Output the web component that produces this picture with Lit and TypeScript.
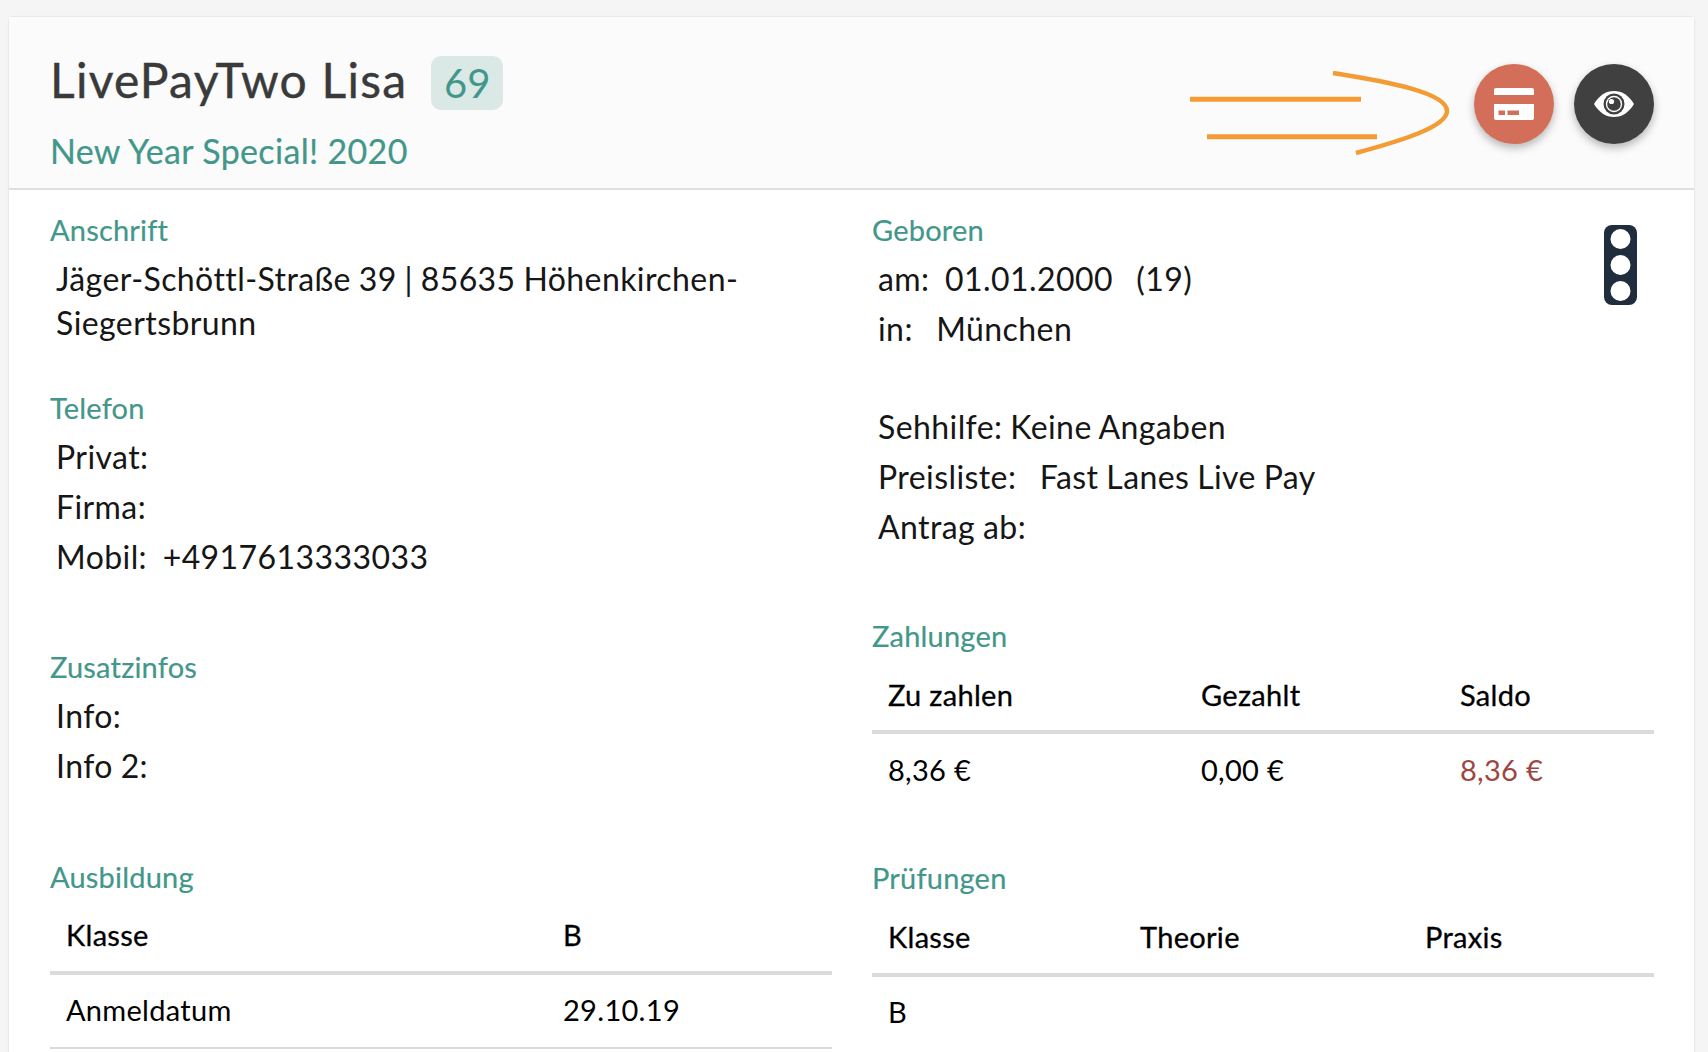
import { LitElement, html, css } from 'lit';
import { customElement } from 'lit/decorators.js';

@customElement('app-root')
export class AppRoot extends LitElement {
  static styles = css`
    :host {
      display: block;
      height: 1052px;
      overflow: hidden;
      box-sizing: border-box;
      padding: 17px 14px 0 9px;
      background: #f5f5f5;
      font-family: Lato, 'Noto Sans', sans-serif;
      font-size: 32px;
      color: #161616;
    }

    .card {
      height: 1100px;
      background: #fff;
      border-radius: 4px;
      box-shadow: 0 0 2px rgba(0, 0, 0, 0.18);
    }

    .head {
      position: relative;
      box-sizing: border-box;
      height: 173px;
      padding: 33px 40px 0 41px;
      display: flex;
      justify-content: space-between;
      background: #fbfbfb;
      border-bottom: 2px solid #dfdfdf;
    }

    .title-line {
      display: flex;
      align-items: center;
      gap: 24px;
    }

    .name {
      margin-bottom: 6px;
      font-size: 48px;
      line-height: 60px;
      letter-spacing: 1.23px;
      color: #3a3a3a;
      -webkit-text-stroke: 0.4px #3a3a3a;
    }

    .badge {
      width: 72px;
      height: 54px;
      display: flex;
      align-items: center;
      justify-content: center;
      border-radius: 10px;
      background: #dae8e6;
      color: #43978a;
      font-size: 40px;
    }

    .subtitle {
      margin-top: 13px;
      font-size: 34px;
      line-height: 44px;
      letter-spacing: 0.33px;
      color: #43978a;
      -webkit-text-stroke: 0.2px #43978a;
    }

    .actions {
      display: flex;
      gap: 20px;
      padding-top: 13.5px;
    }

    .round {
      width: 80px;
      height: 80px;
      border-radius: 50%;
      display: flex;
      align-items: center;
      justify-content: center;
      box-shadow: 0 4px 8px rgba(0, 0, 0, 0.28);
    }

    .round.pay {
      background: #d36f58;
    }

    .round.view {
      background: #404040;
    }

    .arrow {
      position: absolute;
      left: 1176px;
      top: 48px;
    }

    .body {
      position: relative;
      display: grid;
      grid-template-columns: 782px 782px;
      column-gap: 40px;
      padding: 22px 40px 0 41px;
    }

    .signal {
      position: absolute;
      left: 1595px;
      top: 35px;
    }

    .label {
      font-size: 29px;
      line-height: 36px;
      letter-spacing: 0.2px;
      color: #43978a;
      margin-bottom: 9px;
      -webkit-text-stroke: 0.2px #43978a;
    }

    .rows {
      padding-left: 6px;
      letter-spacing: 0.42px;
      word-spacing: -0.8px;
    }

    .rows p {
      margin: 0 0 6px;
      line-height: 44px;
      white-space: pre-wrap;
    }

    .m-telefon {
      margin-top: 45px;
    }

    .m-zusatz {
      margin-top: 70px;
    }

    .m-ausbildung {
      margin-top: 70.5px;
    }

    .m-sehhilfe {
      margin-top: 54px;
    }

    .m-zahlungen {
      margin-top: 69px;
    }

    .m-pruefungen {
      margin-top: 54px;
    }

    .label.tight {
      margin-bottom: 0;
    }

    .tr {
      display: grid;
      padding-left: 16px;
      font-size: 29px;
      line-height: 44.8px;
      letter-spacing: 0.3px;
      color: #000;
    }

    .tr.th {
      padding-top: 18.6px;
      padding-bottom: 13px;
      border-bottom: 4px solid #dbdbdb;
      -webkit-text-stroke: 0.3px #000;
    }

    .tr.td {
      padding-top: 13.6px;
      padding-bottom: 13.6px;
      border-bottom: 2px solid #dbdbdb;
    }

    .tr.open {
      border-bottom: none;
    }

    .cols-training {
      grid-template-columns: 497px 1fr;
    }

    .cols-pay {
      grid-template-columns: 313px 259px 1fr;
    }

    .cols-exam {
      grid-template-columns: 252px 285px 1fr;
    }

    .due {
      color: #9c4644;
    }
  `;

  render() {
    return html`
      <div class="card">
        <header class="head">
          <div>
            <div class="title-line">
              <span class="name">LivePayTwo Lisa</span>
              <span class="badge">69</span>
            </div>
            <div class="subtitle">New Year Special! 2020</div>
          </div>
          <div class="actions">
            <div class="round pay">
              <svg width="40" height="32" viewBox="0 0 40 32">
                <path
                  fill="#fff"
                  d="M0 7V2a2 2 0 0 1 2-2h36a2 2 0 0 1 2 2v5zM0 16h40v14a2 2 0 0 1-2 2H2a2 2 0 0 1-2-2zM4.500 22.500v4.500h6.500v-4.500zM13.500 22.500v4.500h11.500v-4.500z"
                  fill-rule="evenodd"
                />
              </svg>
            </div>
            <div class="round view">
              <svg width="40" height="26" viewBox="0 0 40 26">
                <path fill="#fff" d="M0 13C5 4.500 12 0 20 0s15 4.500 20 13c-5 8.500-12 13-20 13S5 21.500 0 13z" />
                <circle cx="20" cy="13" r="10.500" fill="#404040" />
                <circle cx="20" cy="13" r="8.200" fill="#fff" />
                <circle cx="20" cy="13" r="6.800" fill="#404040" />
                <circle cx="17.500" cy="10.500" r="2.600" fill="#fff" />
              </svg>
            </div>
          </div>
          <svg class="arrow" width="280" height="100" viewBox="0 0 280 100" fill="none" stroke="#f39c35" stroke-width="5">
            <path d="M5 34.300H176" />
            <path d="M22 71.700H192" />
            <path stroke-width="4.500" d="M148 8C205 17 262 28 262 46C262 62 215 76 171 88" />
          </svg>
        </header>

        <div class="body">
          <svg class="signal" width="33" height="80" viewBox="0 0 33 80">
            <rect width="33" height="80" rx="8" fill="#1f2d3d" />
            <circle cx="16.500" cy="14" r="10" fill="#fff" />
            <circle cx="16.500" cy="40" r="10" fill="#fff" />
            <circle cx="16.500" cy="66" r="10" fill="#fff" />
          </svg>

          <div>
            <div class="label">Anschrift</div>
            <div class="rows">
              <p>Jäger-Schöttl-Straße 39 | 85635 Höhenkirchen-<br />Siegertsbrunn</p>
            </div>

            <div class="label m-telefon">Telefon</div>
            <div class="rows">
              <p>Privat:</p>
              <p>Firma:</p>
              <p>Mobil:  +4917613333033</p>
            </div>

            <div class="label m-zusatz">Zusatzinfos</div>
            <div class="rows">
              <p>Info:</p>
              <p>Info 2:</p>
            </div>

            <div class="label tight m-ausbildung">Ausbildung</div>
            <div class="tr th cols-training"><span>Klasse</span><span>B</span></div>
            <div class="tr td cols-training"><span>Anmeldatum</span><span>29.10.19</span></div>
          </div>

          <div>
            <div class="label">Geboren</div>
            <div class="rows">
              <p>am:  01.01.2000   (19)</p>
              <p>in:   München</p>
            </div>

            <div class="rows m-sehhilfe">
              <p>Sehhilfe: Keine Angaben</p>
              <p>Preisliste:   Fast Lanes Live Pay</p>
              <p>Antrag ab:</p>
            </div>

            <div class="label tight m-zahlungen">Zahlungen</div>
            <div class="tr th cols-pay"><span>Zu zahlen</span><span>Gezahlt</span><span>Saldo</span></div>
            <div class="tr td open cols-pay"><span>8,36 €</span><span>0,00 €</span><span class="due">8,36 €</span></div>

            <div class="label tight m-pruefungen">Prüfungen</div>
            <div class="tr th cols-exam"><span>Klasse</span><span>Theorie</span><span>Praxis</span></div>
            <div class="tr td open cols-exam"><span>B</span><span></span><span></span></div>
          </div>
        </div>
      </div>
    `;
  }
}

declare global {
  interface HTMLElementTagNameMap {
    'app-root': AppRoot;
  }
}
